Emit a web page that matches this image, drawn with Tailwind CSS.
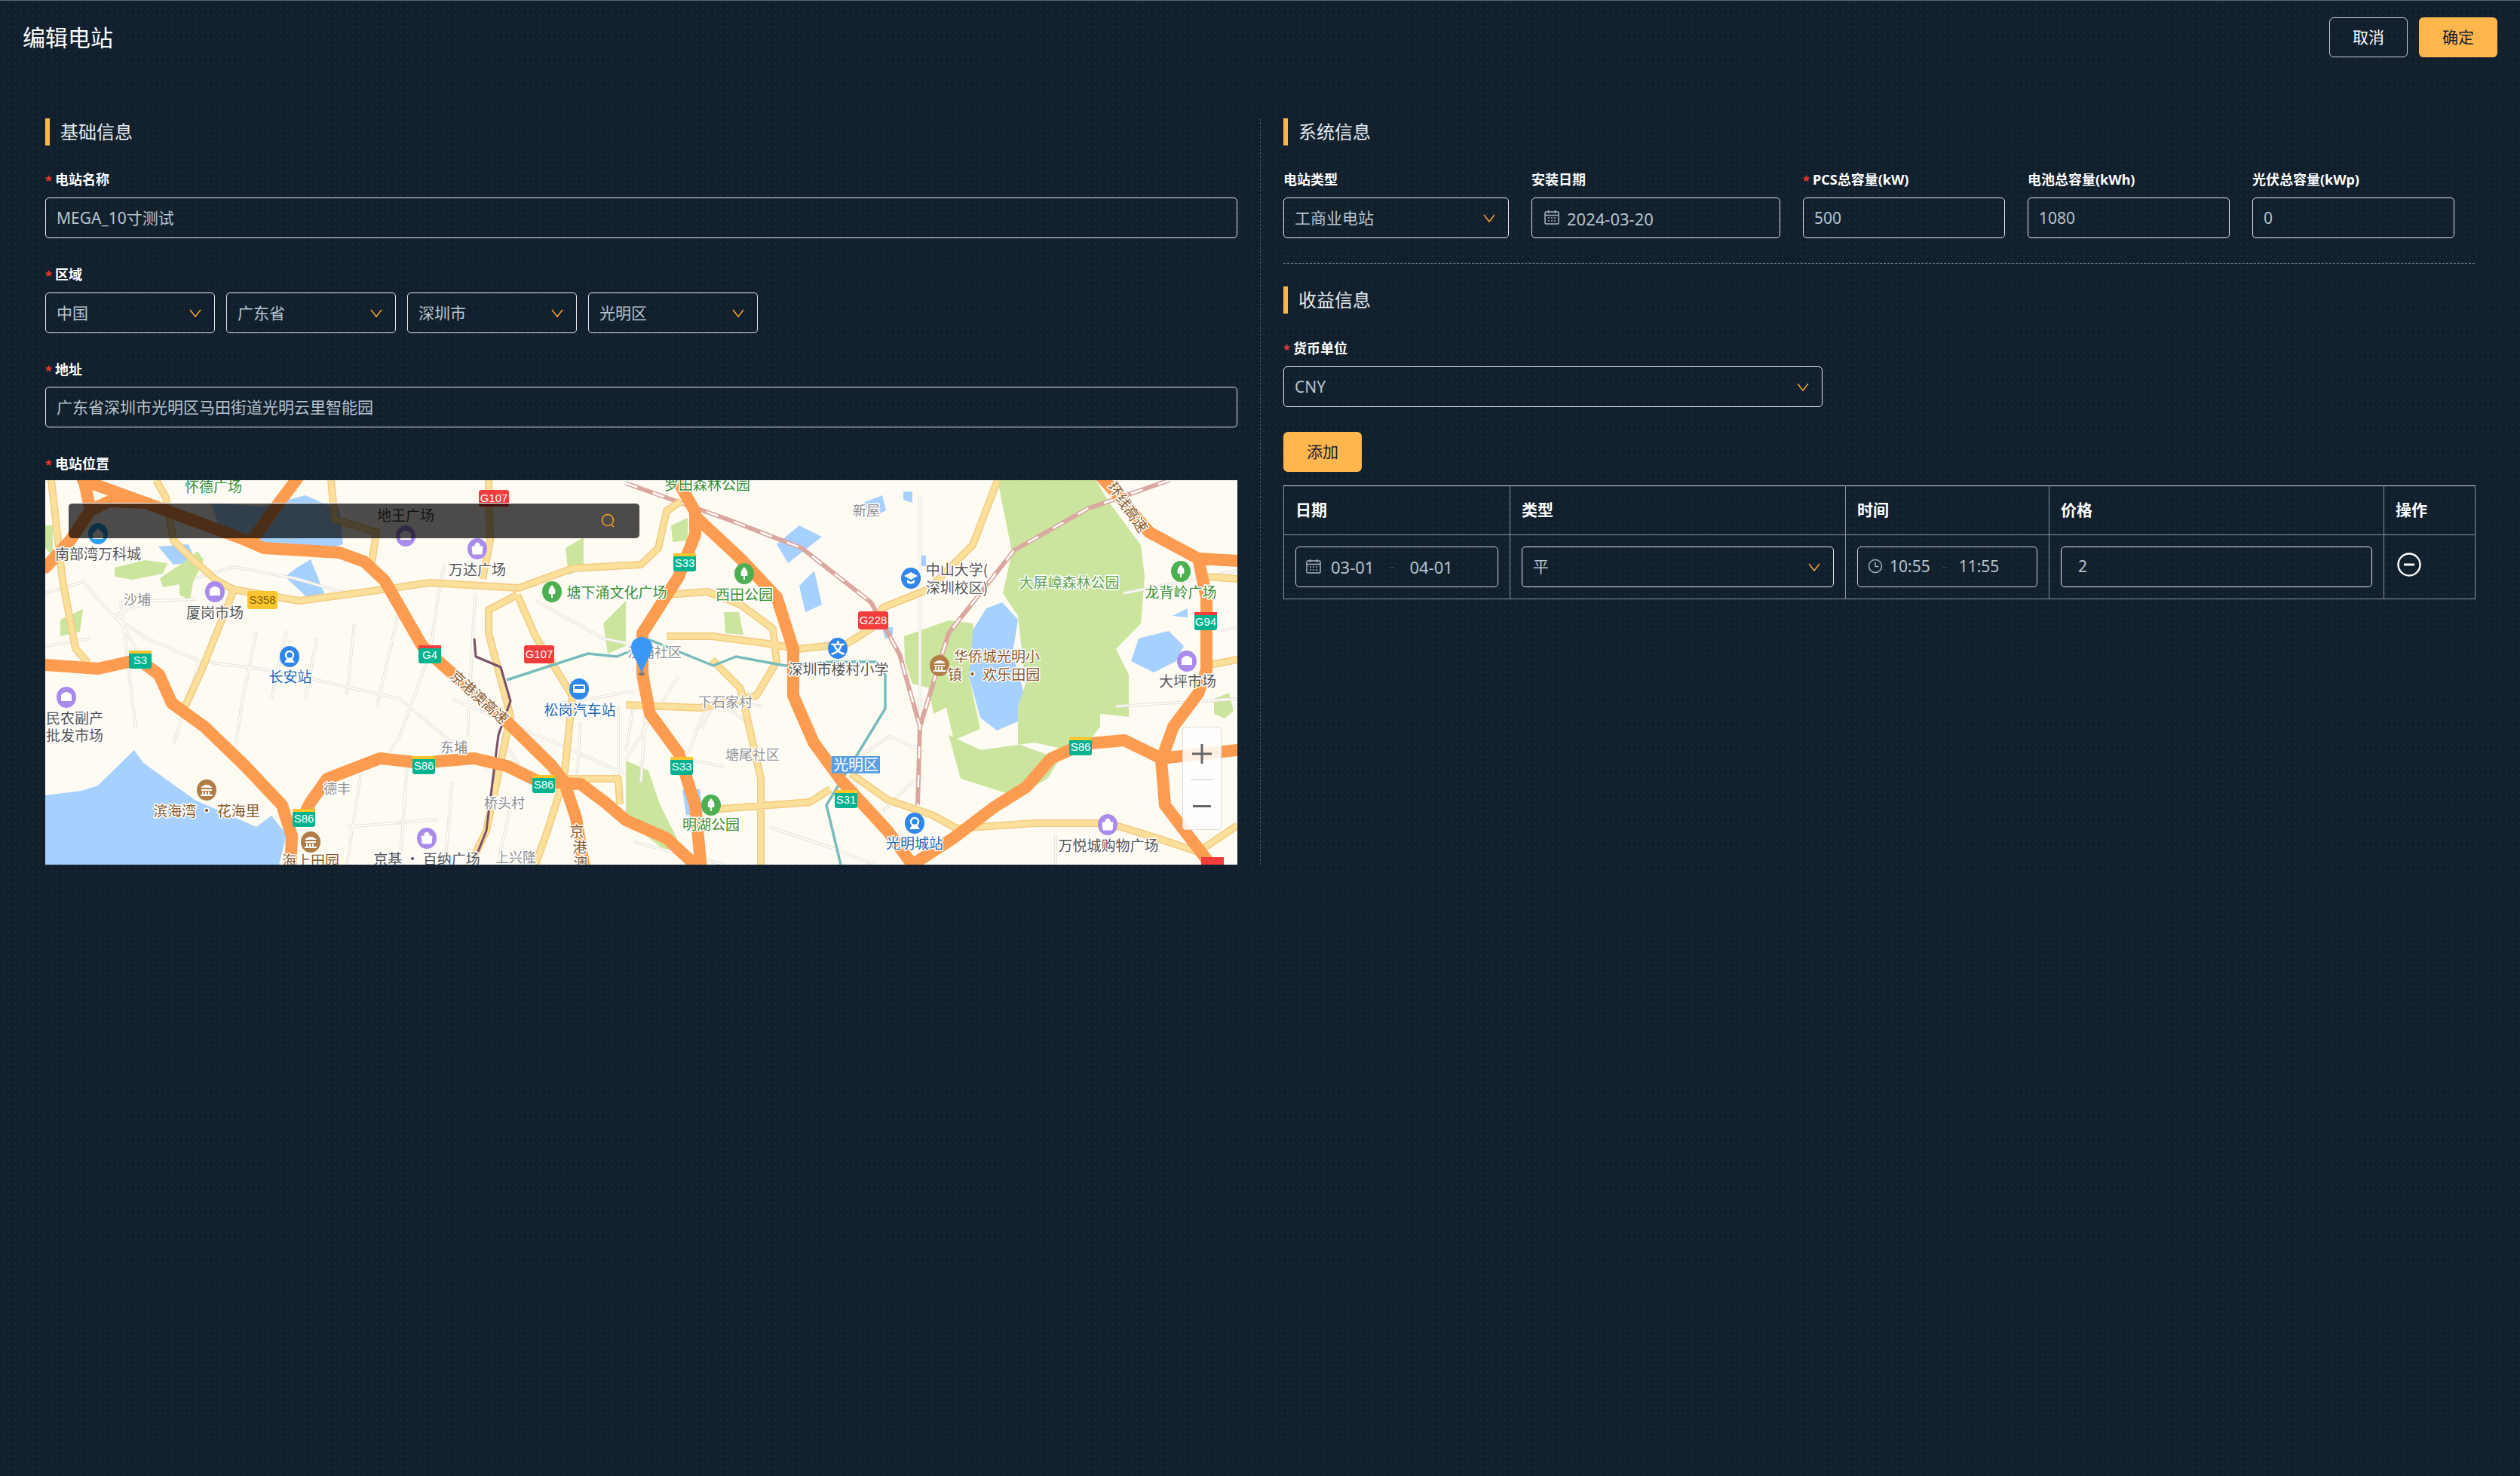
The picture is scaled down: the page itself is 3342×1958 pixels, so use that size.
<!DOCTYPE html>
<html lang="zh-CN">
<head>
  <meta charset="UTF-8">
  <title>编辑电站</title>
  <script src="https://cdn.jsdelivr.net/npm/@tailwindcss/browser@4"></script>
</head>
<body class="bg-[#12202e] bg-[radial-gradient(#182c3a_1px,transparent_1px)] bg-[length:8px_8px] text-white font-['Noto_Sans','Noto_Sans_CJK_SC',sans-serif] h-[1958px] overflow-hidden">
  <!-- header -->
  <div class="border-t border-[#5b6b76] h-[157px] pt-[22px] pl-[30px] pr-[30px] flex justify-between items-start">
    <h1 class="text-[30px] leading-[50px] pt-[2px] text-white">编辑电站</h1>
    <div class="flex gap-[15px]">
      <button class="w-[104px] h-[53px] rounded-[6px] border border-[#c8ccd0] text-[21px] text-white">取消</button>
      <button class="w-[104px] h-[53px] rounded-[6px] bg-[#ffb74d] text-[21px] text-[#12202e]">确定</button>
    </div>
  </div>

  <div class="flex pl-[60px] pr-[60px]">
    <!-- left column -->
    <div class="w-[1581px]">
      <div class="border-l-[6px] border-[#ffb74d] h-[36px] pl-[14px] text-[24px] leading-[36px] text-[#e6ecef]">基础信息</div>

      <div class="mt-[32px] h-[24px] pt-[3px] flex items-center text-[18px] font-bold"><span class="text-[#f5372c] w-[13px] text-[16px]">*</span>电站名称</div>
      <div class="mt-[13px] h-[54px] border border-[#e8e8e8] rounded-[5px] px-[14px] pt-[2px] flex items-center text-[21px] text-[#b8c4cc]">MEGA_10寸测试</div>

      <div class="mt-[35px] h-[24px] pt-[3px] flex items-center text-[18px] font-bold"><span class="text-[#f5372c] w-[13px] text-[16px]">*</span>区域</div>
      <div class="mt-[13px] flex gap-[15px]">
        <div class="w-[225px] h-[54px] border border-[#e8e8e8] rounded-[5px] pl-[14px] pr-[16px] pt-[2px] flex items-center justify-between text-[21px] text-[#b8c4cc]">中国
          <svg class="w-[18px] h-[18px] -mt-[2px]" viewBox="0 0 18 18" fill="none" stroke="#f5a030" stroke-width="1.6"><path d="M2 5l7 9 7-9"/></svg></div>
        <div class="w-[225px] h-[54px] border border-[#e8e8e8] rounded-[5px] pl-[14px] pr-[16px] pt-[2px] flex items-center justify-between text-[21px] text-[#b8c4cc]">广东省
          <svg class="w-[18px] h-[18px] -mt-[2px]" viewBox="0 0 18 18" fill="none" stroke="#f5a030" stroke-width="1.6"><path d="M2 5l7 9 7-9"/></svg></div>
        <div class="w-[225px] h-[54px] border border-[#e8e8e8] rounded-[5px] pl-[14px] pr-[16px] pt-[2px] flex items-center justify-between text-[21px] text-[#b8c4cc]">深圳市
          <svg class="w-[18px] h-[18px] -mt-[2px]" viewBox="0 0 18 18" fill="none" stroke="#f5a030" stroke-width="1.6"><path d="M2 5l7 9 7-9"/></svg></div>
        <div class="w-[225px] h-[54px] border border-[#e8e8e8] rounded-[5px] pl-[14px] pr-[16px] pt-[2px] flex items-center justify-between text-[21px] text-[#b8c4cc]">光明区
          <svg class="w-[18px] h-[18px] -mt-[2px]" viewBox="0 0 18 18" fill="none" stroke="#f5a030" stroke-width="1.6"><path d="M2 5l7 9 7-9"/></svg></div>
      </div>

      <div class="mt-[35px] h-[24px] pt-[3px] flex items-center text-[18px] font-bold"><span class="text-[#f5372c] w-[13px] text-[16px]">*</span>地址</div>
      <div class="mt-[12px] h-[54px] border border-[#e8e8e8] rounded-[5px] px-[14px] pt-[2px] flex items-center text-[21px] text-[#b8c4cc]">广东省深圳市光明区马田街道光明云里智能园</div>

      <div class="mt-[35px] h-[24px] pt-[3px] flex items-center text-[18px] font-bold"><span class="text-[#f5372c] w-[13px] text-[16px]">*</span>电站位置</div>

      <!-- map -->
      <div class="relative mt-[11px] w-[1581px] h-[510px] overflow-hidden bg-[#fefbf3]">
        <svg class="block" width="1581" height="510" viewBox="0 0 1581 510" font-family="'Noto Sans CJK SC',sans-serif">
          <defs>
            <g id="poi-shop"><ellipse cx="0" cy="0" rx="13" ry="14" fill="#a98bec"/><path d="M-7-3q7-8 14 0v8h-14z" fill="#fff"/></g>
            <g id="poi-bag"><ellipse cx="0" cy="0" rx="13" ry="14" fill="#a98bec"/><path d="M-7-3h14l-1 10h-12zM-3-3v-3q3-4 6 0v3" fill="#fff" stroke="#fff" stroke-width="1"/></g>
            <g id="poi-tree"><ellipse cx="0" cy="0" rx="13" ry="14" fill="#4caf50"/><path d="M0-9q6 6 4 12h-3v5h-2v-5h-3q-2-6 4-12z" fill="#fff"/></g>
            <g id="poi-rail"><ellipse cx="0" cy="0" rx="13" ry="14" fill="#2f86eb"/><circle cx="0" cy="-2" r="5" fill="none" stroke="#fff" stroke-width="2.4"/><path d="M-7 8h14l-4-6h-6z" fill="#fff"/></g>
            <g id="poi-bus"><ellipse cx="0" cy="0" rx="13" ry="14" fill="#2f86eb"/><rect x="-8" y="-6" width="16" height="11" rx="2" fill="#fff"/><rect x="-6" y="-4" width="12" height="4" fill="#2f86eb"/></g>
            <g id="poi-edu"><ellipse cx="0" cy="0" rx="13" ry="14" fill="#2f86eb"/><path d="M-9-3l9-5 9 5-9 5zM-5 2v4q5 3 10 0v-4l-5 3z" fill="#fff"/></g>
            <g id="poi-home"><ellipse cx="0" cy="0" rx="13" ry="14" fill="#2aa0e6"/><path d="M-7 0l7-7 7 7v7h-14z" fill="#fff"/></g>
            <g id="poi-museum"><ellipse cx="0" cy="0" rx="13" ry="14" fill="#b27c46"/><path d="M-8-3q8-8 16 0zM-7-1h14v2h-14zM-6 2h2v4h-2zM-2 2h2v4h-2zM2 2h2v4h-2zM-8 6h16v2h-16z" fill="#fff"/></g>
            <path id="yellow-roads" d="M147 0L160 23 170 80 190 100 227 133 250 145 337 160 427 148 510 136 628 143 699 117 790 112 813 90 824 41 843 28M8 0L23 133 40 223 57 243M250 146L207 253 181 310M626 152L588 172 588 203 617 313 585 465 563 510M626 152L650 207 699 286 688 396 666 465 650 510M588 0L590 80 580 131M379 0L384 52 439 69 433 110M1263 0L1230 86 1171 145 1111 169 1095 197 1063 217 998 224 960 217 884 207 824 207M770 298L868 302 943 286 970 241 965 197 922 165 878 148 824 152M884 238L922 276 949 396 949 510M884 437L1014 427 1041 410M1068 389L1117 424 1176 444 1209 462 1312 455 1410 455 1475 475 1529 493 1581 458M1540 128L1581 131M1545 245L1581 238M688 396L760 396 762 430"/>
            <path id="rail-lines" d="M770 4L905 52 1003 90 1095 162 1133 231 1160 327 1157 431M1491 0L1382 38 1285 93 1198 203 1160 327"/>
            <path id="minor-roads" d="M0 150L50 135 90 180 140 160 200 158M90 180L135 210 205 240 320 255 380 270 470 290 530 340 590 385M205 240L170 350M280 200L260 300 250 370M320 200L300 290M360 210L345 290M410 190L400 285M470 170L440 300M0 220L60 210M130 240L95 180M200 130L250 115 330 130 400 150M100 160L120 330M530 110L520 160 510 230 470 340 450 370M570 150L560 340M650 160L740 210 790 220M540 290L680 350 770 390M600 330L640 400M660 300L780 280M710 320L705 400M760 300L760 430M420 380L400 510M480 380L470 510M540 400L530 510M400 460L520 450M620 420L600 510M800 250L790 400M840 260L770 370M950 300L890 290 870 330M1160 20L1160 320M1165 360L1120 340 1075 370 1075 420 1120 470M1110 440L1150 400 1165 395M960 460L1050 490 1100 510M780 480L900 510M1340 470L1340 510M1420 300L1581 290M1430 150L1581 120M1560 200L1581 195M780 300L770 360M880 290L850 370 900 380M930 320L900 300"/>
          </defs>

          <!-- water -->
          <g fill="#a6d0ff">
            <path d="M0 418L48 412 70 405 118 358 130 375 200 425 280 460 300 445 320 470 310 510 0 510z"/>
            <path d="M1225 207L1248 170 1269 162 1290 185 1283 230 1300 290 1310 305 1290 320 1262 332 1240 315 1225 260z"/>
            <path d="M220 30L290 35 345 20 390 40 395 85 345 100 330 88 300 92 262 75 230 60zM150 88L190 85 200 108 170 112zM335 115L352 105 370 150 350 158 318 128z"/>
            <path d="M1450 210L1490 200 1510 220 1500 240 1470 255 1440 240zM970 85L1000 60 1030 75 985 110zM1085 30L1110 20 1115 40 1095 50zM1000 140L1020 120 1030 165 1008 175zM845 410L868 410 872 440 850 445z"/>
            <path d="M1110 195l14 0 0 10 -10 6zM1138 15l12 0 0 15 -12 -4zM1160 100l8 0 0 14 -8 0zM1495 180l0 0 20 -10 0 12z"/>
          </g>
          <!-- parks -->
          <g fill="#cbe59e">
            <path d="M1263 0L1393 0 1410 28 1453 86 1458 128 1453 190 1420 224 1437 258 1437 314 1399 310 1399 327 1388 341 1355 358 1312 348 1241 358 1198 338 1214 396 1290 420 1330 395 1345 370 1290 350 1290 300 1300 270 1290 180 1270 150 1282 95z"/>
            <path d="M1139 207L1198 186 1231 190 1225 260 1240 330 1205 345 1190 280 1150 270 1140 240z"/>
            <path d="M770 372L800 385 815 430 840 480 860 500 820 490 770 450z"/>
            <path d="M1170 270l24 -10 4 40 -20 10zM900 175l20 0 6 30 -24 -2zM830 60l22 -10 0 30 -20 2z"/>
            <path d="M92 116l40 -10 30 4 -6 14 -40 8 -24 -4zM152 130l30 -20 20 -16 8 12 -14 30 -4 24 -14 -8 0 -14 -22 4zM1550 290l20 -8 6 24 -12 10 -14 -6zM20 185l30 -14 -4 30 -26 6zM0 60l10 0 0 40 -10 -10zM690 90l24 -14 0 40 -20 10zM740 190l30 -30 0 60 -24 10z"/>
          </g>
          <!-- minor roads -->
          <use href="#minor-roads" fill="none" stroke="#e9e5dc" stroke-width="4" stroke-linejoin="round"/>
          <use href="#minor-roads" fill="none" stroke="#fff" stroke-width="1.5" stroke-linejoin="round"/>
          <!-- rail -->
          <use href="#rail-lines" fill="none" stroke="#dba8a0" stroke-width="6"/>
          <use href="#rail-lines" fill="none" stroke="#fff" stroke-width="2.5" stroke-dasharray="16 22"/>
          <!-- yellow roads -->
          <use href="#yellow-roads" fill="none" stroke="#f4ca80" stroke-width="10" stroke-linejoin="round"/>
          <use href="#yellow-roads" fill="none" stroke="#fae09b" stroke-width="7" stroke-linejoin="round"/>
          <!-- metro -->
          <path fill="none" stroke="#77bcbc" stroke-width="3.5" stroke-linejoin="round" d="M612 265L720 230 758 234 775 227 802 212 886 246 916 234 981 246 1046 241 1101 241 1114 258 1114 303 1036 431 1055 510"/>
          <path fill="none" stroke="#7a4f68" stroke-width="3" stroke-linejoin="round" d="M569 210L571 234 604 248 617 293 601 338 585 465 571 500"/>
          <!-- expressways -->
          <path fill="none" stroke="#fd9c50" stroke-width="16" stroke-linejoin="round" stroke-linecap="round" d="M50 -6L60 40 33 80 0 116M50 0L133 30 257 76 290 90 390 96 423 108 450 133 500 220 510 230 612 320 672 379 688 400 704 448 715 516M337 -6L310 30 277 76M60 40L85 28 133 30M0 245L70 250 124 238 151 258 168 296 211 327 265 379 314 431 327 472 325 516M340 450L352 427 374 396 444 369 498 375 569 369 612 379 655 400 710 403 742 427 770 451 824 475 868 516M835 -6L862 42 862 72 840 128 792 203 792 258 802 310 840 362 862 431 870 516M862 48L922 104 970 155 992 224 992 286 1019 348 1057 400 1117 465 1150 510 1204 475 1258 434 1301 407 1334 369 1377 350 1431 345 1480 369 1581 358M1399 -6L1420 17 1464 69 1529 104 1581 107M1529 104L1540 155 1540 252 1529 283 1496 327 1480 372 1485 431 1550 516"/>
          <!-- shields -->
          <g font-size="15" text-anchor="middle" fill="#fff" font-family="'Liberation Sans',sans-serif">
            <rect x="575" y="13" width="40" height="22" rx="3" fill="#f33c3c"/><text x="595" y="29">G107</text>
            <rect x="635" y="219" width="40" height="24" rx="3" fill="#f33c3c"/><text x="655" y="236">G107</text>
            <rect x="1078" y="174" width="40" height="24" rx="3" fill="#f33c3c"/><text x="1098" y="191">G228</text>
            <rect x="1533" y="500" width="30" height="14" fill="#f33c3c"/>
            <rect x="268" y="147" width="40" height="24" rx="3" fill="#fcc52d"/><text x="288" y="164" fill="#7a5a10">S358</text>
            <rect x="111" y="226" width="30" height="24" rx="3" fill="#00b38f"/><rect x="111" y="226" width="30" height="4" fill="#fcc52d"/><text x="126" y="244">S3</text>
            <rect x="495" y="219" width="30" height="24" rx="3" fill="#00b38f"/><rect x="495" y="219" width="30" height="4" fill="#f33c3c"/><text x="510" y="237">G4</text>
            <rect x="487" y="366" width="30" height="24" rx="3" fill="#00b38f"/><rect x="487" y="366" width="30" height="4" fill="#fcc52d"/><text x="502" y="384">S86</text>
            <rect x="646" y="391" width="30" height="24" rx="3" fill="#00b38f"/><rect x="646" y="391" width="30" height="4" fill="#fcc52d"/><text x="661" y="409">S86</text>
            <rect x="328" y="436" width="30" height="24" rx="3" fill="#00b38f"/><rect x="328" y="436" width="30" height="4" fill="#fcc52d"/><text x="343" y="454">S86</text>
            <rect x="833" y="97" width="30" height="24" rx="3" fill="#00b38f"/><rect x="833" y="97" width="30" height="4" fill="#fcc52d"/><text x="848" y="115">S33</text>
            <rect x="829" y="367" width="30" height="24" rx="3" fill="#00b38f"/><rect x="829" y="367" width="30" height="4" fill="#fcc52d"/><text x="844" y="385">S33</text>
            <rect x="1047" y="411" width="30" height="24" rx="3" fill="#00b38f"/><rect x="1047" y="411" width="30" height="4" fill="#fcc52d"/><text x="1062" y="429">S31</text>
            <rect x="1358" y="341" width="30" height="24" rx="3" fill="#00b38f"/><rect x="1358" y="341" width="30" height="4" fill="#fcc52d"/><text x="1373" y="359">S86</text>
            <rect x="1524" y="175" width="30" height="24" rx="3" fill="#00b38f"/><rect x="1524" y="175" width="30" height="4" fill="#f33c3c"/><text x="1539" y="193">G94</text>
          </g>
          <!-- poi icons -->
          <use href="#poi-shop" x="225" y="148"/><use href="#poi-bag" x="573" y="91"/><use href="#poi-shop" x="28" y="288"/><use href="#poi-bag" x="506" y="475"/><use href="#poi-shop" x="1514" y="240"/><use href="#poi-bag" x="1409" y="457"/><use href="#poi-shop" x="478" y="74"/>
          <use href="#poi-tree" x="672" y="148"/><use href="#poi-tree" x="927" y="124"/><use href="#poi-tree" x="1506" y="121"/><use href="#poi-tree" x="883" y="431"/>
          <use href="#poi-rail" x="324" y="234"/><use href="#poi-bus" x="708" y="277"/><use href="#poi-edu" x="1148" y="130"/><use href="#poi-rail" x="1153" y="455"/><use href="#poi-home" x="70" y="71"/>
          <ellipse cx="1051" cy="223" rx="13" ry="14" fill="#2f86eb"/><text x="1051" y="230" font-size="19" font-weight="700" fill="#fff" text-anchor="middle">文</text>
          <use href="#poi-museum" x="214" y="411"/><use href="#poi-museum" x="352" y="480"/><use href="#poi-museum" x="1186" y="246"/>
          <!-- labels -->
          <g font-size="19" text-anchor="middle" paint-order="stroke" stroke="#fff" stroke-width="3" stroke-linejoin="round">
            <g fill="#555">
              <text x="70" y="105">南部湾万科城</text><text x="573" y="126">万达广场</text><text x="225" y="183">厦岗市场</text>
              <text x="39" y="323">民农副产</text><text x="39" y="346">批发市场</text><text x="506" y="510">京基 · 百纳广场</text>
              <text x="478" y="54" fill="#444">地王广场</text>
              <text x="1209" y="126">中山大学(</text><text x="1209" y="150">深圳校区)</text><text x="1515" y="274">大坪市场</text>
              <text x="1052" y="258">深圳市楼村小学</text><text x="1410" y="492">万悦城购物广场</text>
            </g>
            <g fill="#8f8f8f" font-size="18">
              <text x="122" y="165">沙埔</text><text x="542" y="361">东埔</text><text x="387" y="416">德丰</text><text x="609" y="435">桥头村</text><text x="624" y="507">上兴隆</text>
              <text x="1089" y="47">新屋</text><text x="902" y="301">下石家村</text><text x="938" y="371">塘尾社区</text><text x="808" y="235">沙浦社区</text>
            </g>
            <g fill="#38902f">
              <text x="223" y="16">怀德广场</text><text x="758" y="156">塘下涌文化广场</text><text x="878" y="13">罗田森林公园</text><text x="927" y="159">西田公园</text><text x="1506" y="156">龙背岭广场</text><text x="883" y="464">明湖公园</text>
              <text x="1358" y="143" fill="#5fa352">大屏嶂森林公园</text>
            </g>
            <g fill="#1c68b4">
              <text x="325" y="268">长安站</text><text x="709" y="312">松岗汽车站</text><text x="1153" y="489">光明城站</text>
            </g>
            <g fill="#8a5a2a">
              <text x="214" y="446">滨海湾 · 花海里</text><text x="352" y="512">海上田园</text><text x="1262" y="241">华侨城光明小</text><text x="1258" y="265">镇 · 欢乐田园</text>
              <text transform="translate(571 293) rotate(42)">京港澳高速</text><text x="705" y="473">京</text><text x="709" y="494">港</text><text x="710" y="515">澳</text>
              <text transform="translate(1430 40) rotate(55)">环线高速</text>
            </g>
          </g>
          <rect x="1043" y="366" width="64" height="23" fill="#5a9fe3"/>
          <text x="1075" y="385" font-size="20" fill="#fff" text-anchor="middle">光明区</text>
          <!-- station pin -->
          <ellipse cx="791" cy="257" rx="4" ry="2" fill="#777"/>
          <path d="M791 257C786 240 777 232 777 221A14 13 0 0 1 805 221C805 232 796 240 791 257z" fill="#3d97f7"/>
        </svg>
        <!-- search box over map -->
        <div class="absolute left-[31px] top-[30px] w-[757px] h-[47px] rounded-[5px] bg-black/70 border-t border-white flex items-center justify-end pr-[30px]">
          <svg class="w-[22px] h-[22px]" viewBox="0 0 22 22" fill="none" stroke="#f5a030" stroke-width="1.6"><circle cx="10" cy="10" r="7.5"/><path d="M15 16l3 3"/></svg>
        </div>
        <!-- zoom control -->
        <div class="absolute left-[1508px] top-[327px] w-[52px] h-[137px] rounded-[4px] bg-white/85 border border-[#ddd] flex flex-col items-center">
          <svg class="w-[26px] h-[26px] mt-[22px]" viewBox="0 0 26 26" fill="#666"><path d="M0 11.5h26v3h-26zM11.5 0h3v26h-3z"/></svg>
          <div class="w-[30px] border-t border-[#ccc] mt-[21px]"></div>
          <div class="w-[24px] h-[3px] bg-[#666] mt-[33px]"></div>
        </div>
      </div>
    </div>

    <!-- divider -->
    <div class="w-[31px] ml-[30px] border-l border-dashed border-[#4c5a64]"></div>

    <!-- right column -->
    <div class="flex-1 min-w-0">
      <div class="border-l-[6px] border-[#ffb74d] h-[36px] pl-[14px] text-[24px] leading-[36px] text-[#e6ecef]">系统信息</div>

      <div class="mt-[32px] flex gap-[30px]">
        <div class="w-[299px]">
          <div class="h-[24px] pt-[3px] flex items-center text-[18px] font-bold">电站类型</div>
          <div class="mt-[13px] h-[54px] border border-[#e8e8e8] rounded-[5px] pl-[14px] pr-[16px] pt-[2px] flex items-center justify-between text-[21px] text-[#b8c4cc]">工商业电站
            <svg class="w-[18px] h-[18px] -mt-[2px]" viewBox="0 0 18 18" fill="none" stroke="#f5a030" stroke-width="1.6"><path d="M2 5l7 9 7-9"/></svg></div>
        </div>
        <div class="w-[330px]">
          <div class="h-[24px] pt-[3px] flex items-center text-[18px] font-bold">安装日期</div>
          <div class="mt-[13px] h-[54px] border border-[#e8e8e8] rounded-[5px] pl-[16px] pt-[2px] flex items-center gap-[10px] text-[22px] text-[#b8c4cc]">
            <svg class="w-[20px] h-[20px] -mt-[5px]" viewBox="0 0 20 20" fill="none" stroke="#a9b4bc" stroke-width="1.5"><rect x="1" y="3" width="18" height="16" rx="1.5"/><path d="M1 7.5h18M5.5 1v4M14.5 1v4M5 11h2M9 11h2M13 11h2M5 15h2M9 15h2M13 15h2"/></svg>2024-03-20</div>
        </div>
        <div class="w-[268px]">
          <div class="h-[24px] pt-[3px] flex items-center text-[18px] font-bold"><span class="text-[#f5372c] w-[13px] text-[16px]">*</span>PCS总容量(kW)</div>
          <div class="mt-[13px] h-[54px] border border-[#e8e8e8] rounded-[5px] px-[14px] pt-[2px] flex items-center text-[21px] text-[#b8c4cc]">500</div>
        </div>
        <div class="w-[268px]">
          <div class="h-[24px] pt-[3px] flex items-center text-[18px] font-bold">电池总容量(kWh)</div>
          <div class="mt-[13px] h-[54px] border border-[#e8e8e8] rounded-[5px] px-[14px] pt-[2px] flex items-center text-[21px] text-[#b8c4cc]">1080</div>
        </div>
        <div class="w-[268px]">
          <div class="h-[24px] pt-[3px] flex items-center text-[18px] font-bold">光伏总容量(kWp)</div>
          <div class="mt-[13px] h-[54px] border border-[#e8e8e8] rounded-[5px] px-[14px] pt-[2px] flex items-center text-[21px] text-[#b8c4cc]">0</div>
        </div>
      </div>

      <div class="mt-[33px] border-t border-dashed border-[#6a7781]"></div>

      <div class="mt-[30px] border-l-[6px] border-[#ffb74d] h-[36px] pl-[14px] text-[24px] leading-[36px] text-[#e6ecef]">收益信息</div>

      <div class="mt-[33px] h-[24px] pt-[3px] flex items-center text-[18px] font-bold"><span class="text-[#f5372c] w-[13px] text-[16px]">*</span>货币单位</div>
      <div class="mt-[13px] w-[715px] h-[54px] border border-[#e8e8e8] rounded-[5px] pl-[14px] pr-[16px] pt-[2px] flex items-center justify-between text-[21px] text-[#b8c4cc]">CNY
        <svg class="w-[18px] h-[18px] -mt-[2px]" viewBox="0 0 18 18" fill="none" stroke="#f5a030" stroke-width="1.6"><path d="M2 5l7 9 7-9"/></svg></div>

      <button class="block mt-[33px] w-[104px] h-[53px] rounded-[6px] bg-[#ffb74d] text-[21px] text-[#12202e]">添加</button>

      <table class="mt-[18px] w-[1580px] table-fixed border-collapse text-left">
        <colgroup><col class="w-[300px]"><col class="w-[445px]"><col class="w-[270px]"><col class="w-[444px]"><col class="w-[121px]"></colgroup>
        <thead>
          <tr class="h-[65px] text-[21px] font-bold">
            <th class="border border-[#8b959c] border-t-[#d8dcdf] px-[15px]">日期</th>
            <th class="border border-[#8b959c] border-t-[#d8dcdf] px-[15px]">类型</th>
            <th class="border border-[#8b959c] border-t-[#d8dcdf] px-[15px]">时间</th>
            <th class="border border-[#8b959c] border-t-[#d8dcdf] px-[15px]">价格</th>
            <th class="border border-[#8b959c] border-t-[#d8dcdf] px-[15px]">操作</th>
          </tr>
        </thead>
        <tbody>
          <tr class="h-[85px] text-[21px] text-[#b8c4cc]">
            <td class="border border-[#8b959c] px-[15px]">
              <div class="h-[54px] border border-[#c8ccd0] rounded-[5px] pl-[13px] flex items-center text-[22px]">
                <svg class="w-[20px] h-[20px] -mt-[3px] mr-[13px]" viewBox="0 0 20 20" fill="none" stroke="#a9b4bc" stroke-width="1.5"><rect x="1" y="3" width="18" height="16" rx="1.5"/><path d="M1 7.5h18M5.5 1v4M14.5 1v4M5 11h2M9 11h2M13 11h2M5 15h2M9 15h2M13 15h2"/></svg>
                <span>03-01</span><span class="w-[7px] mx-[20px] border-t border-[#3a4650]"></span><span>04-01</span>
              </div>
            </td>
            <td class="border border-[#8b959c] px-[15px]">
              <div class="h-[54px] border border-[#e8e8e8] rounded-[5px] pl-[14px] pr-[16px] flex items-center justify-between">平
                <svg class="w-[18px] h-[18px]" viewBox="0 0 18 18" fill="none" stroke="#f5a030" stroke-width="1.6"><path d="M2 5l7 9 7-9"/></svg></div>
            </td>
            <td class="border border-[#8b959c] px-[15px]">
              <div class="h-[54px] border border-[#c8ccd0] rounded-[5px] pl-[13px] flex items-center">
                <svg class="w-[20px] h-[20px] -mt-[3px] mr-[9px]" viewBox="0 0 20 20" fill="none" stroke="#a9b4bc" stroke-width="1.5"><circle cx="10" cy="10" r="8.5"/><path d="M10 4.5v6h4.5"/></svg>
                <span>10:55</span><span class="w-[6px] mx-[16px] border-t border-[#3a4650]"></span><span>11:55</span>
              </div>
            </td>
            <td class="border border-[#8b959c] px-[15px]">
              <div class="h-[54px] border border-[#e8e8e8] rounded-[5px] pl-[22px] flex items-center">2</div>
            </td>
            <td class="border border-[#8b959c] px-[17px]">
              <svg class="w-[32px] h-[32px] -mt-[6px]" viewBox="0 0 32 32" fill="none" stroke="#fff" stroke-width="2.4"><circle cx="16" cy="16" r="14.5"/><path d="M9 16h14" stroke-width="3"/></svg>
            </td>
          </tr>
        </tbody>
      </table>
    </div>
  </div>
</body>
</html>
